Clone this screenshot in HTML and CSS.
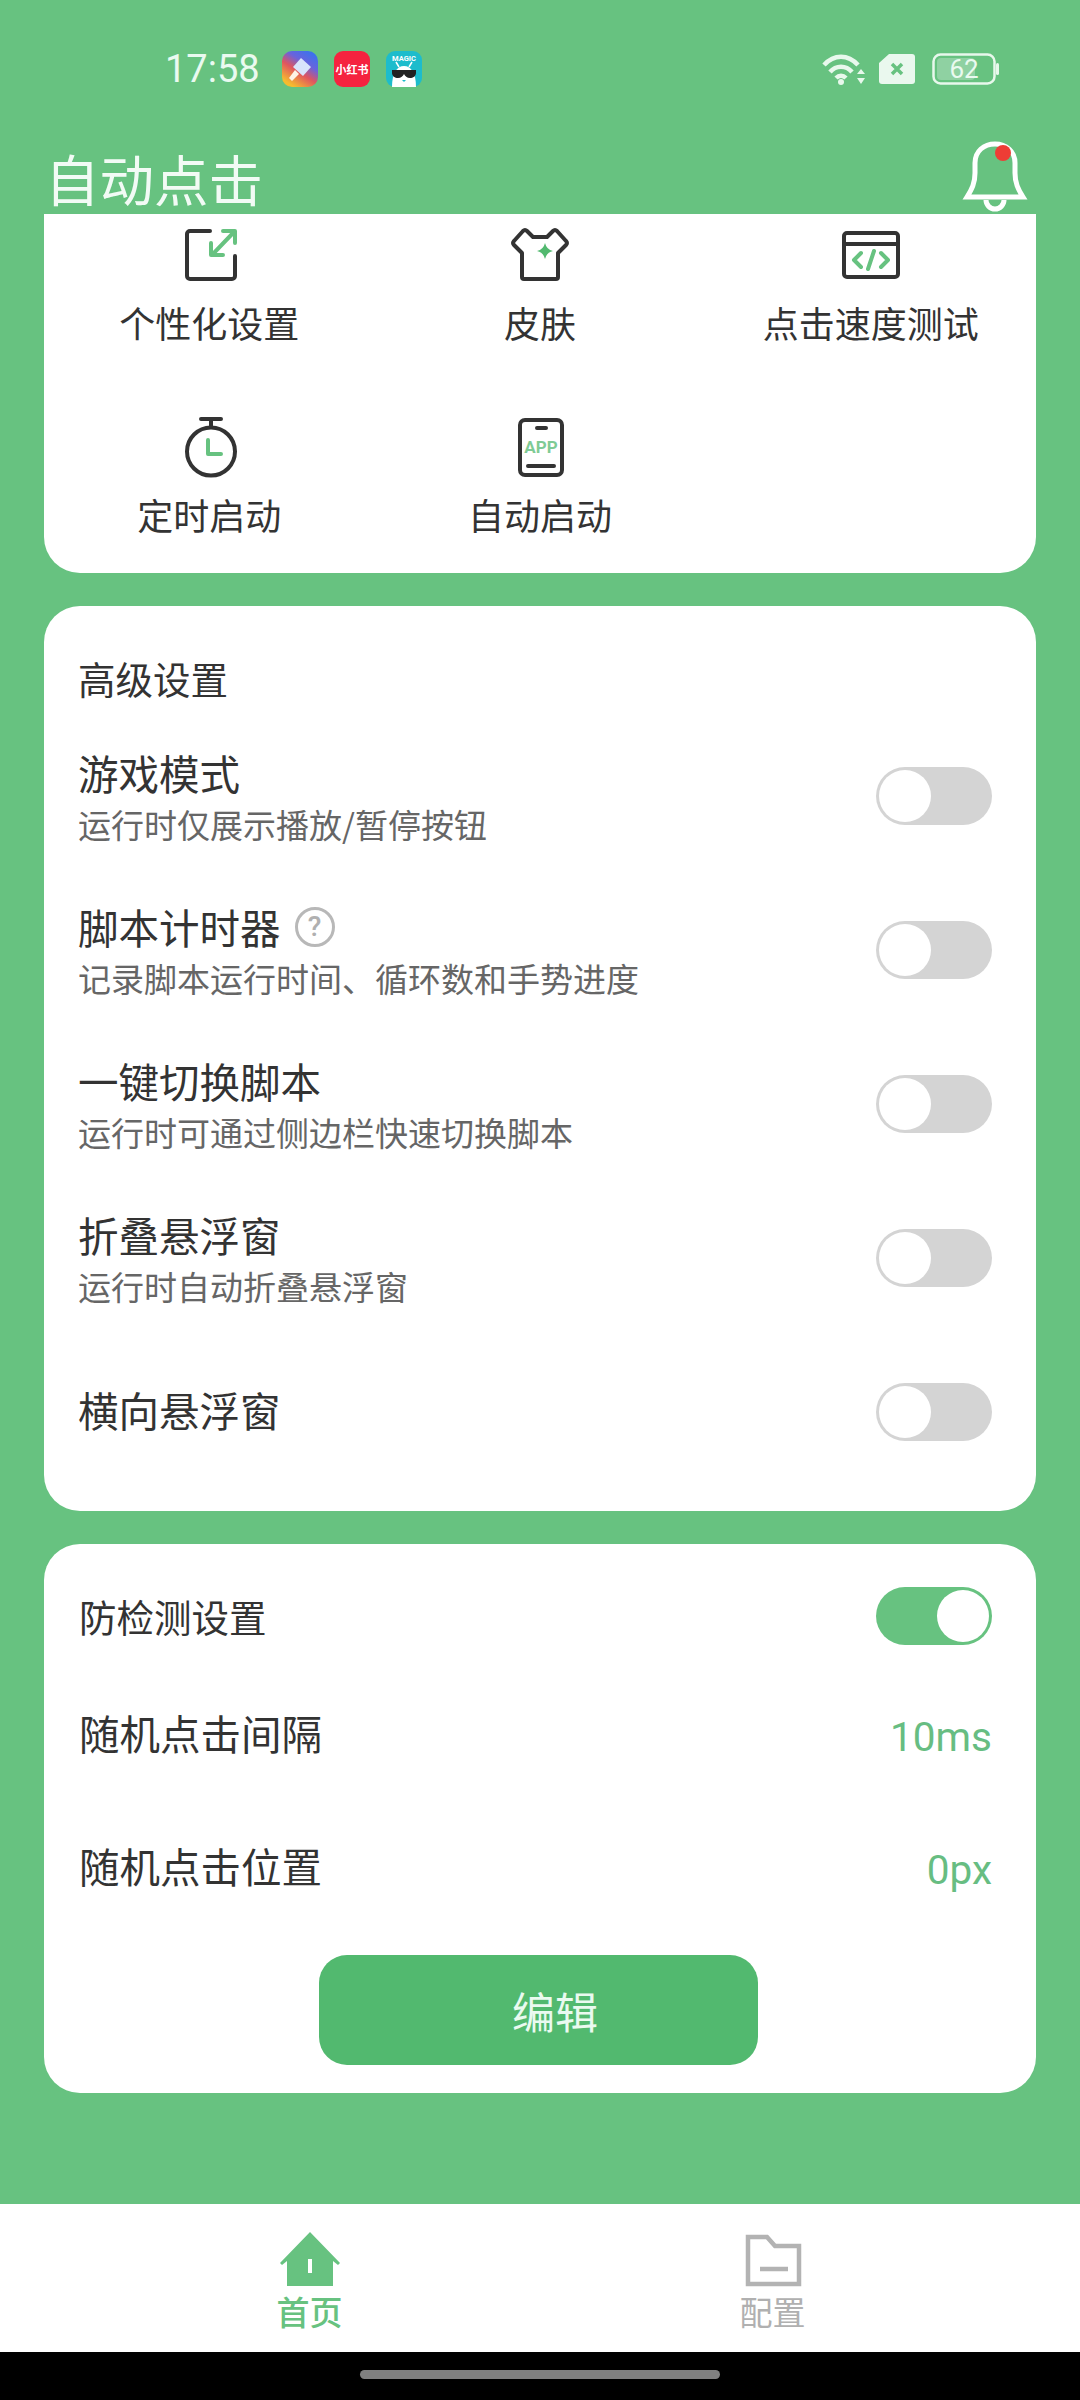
FILE: index.html
```html
<!DOCTYPE html>
<html lang="zh-CN">
<head>
    <meta charset="UTF-8">
    <meta name="viewport" content="width=device-width, initial-scale=1.0">
    <title>自动点击</title>
    <link rel="stylesheet" href="styles.css">
</head>
<body>
    <div class="statusbar">
        <span class="time">17:58</span>
        <svg class="app-icon first" viewBox="0 0 36 36">
            <defs>
                <linearGradient id="brushBg" x1="1" y1="0" x2="0.35" y2="1">
                    <stop offset="0" stop-color="#2a78f2"/>
                    <stop offset="0.4" stop-color="#6a63dc"/>
                    <stop offset="0.65" stop-color="#e0555f"/>
                    <stop offset="1" stop-color="#f6bb2e"/>
                </linearGradient>
            </defs>
            <rect width="36" height="36" rx="10" fill="url(#brushBg)"/>
            <path d="M19 7l10 9-8 9-10-9z" fill="#d9e4fb"/>
            <path d="M13 19l4 4-7 7-3-3z" fill="#fdf3e6"/>
        </svg>
        <svg class="app-icon" viewBox="0 0 36 36">
            <rect width="36" height="36" rx="9" fill="#f5233f"/>
            <text x="18" y="23" class="xhs-text">小红书</text>
        </svg>
        <svg class="app-icon" viewBox="0 0 36 36">
            <rect width="36" height="36" rx="9" fill="#1dbccc"/>
            <text x="18" y="10" class="magic-text">MAGIC</text>
            <path d="M10 11l3 5M26 11l-3 5" stroke="#ffffff" stroke-width="1.5"/>
            <path d="M6 36c0-14 5-21 12-21s12 7 12 21z" fill="#ffffff"/>
            <path d="M6 19h24v3c0 3-3 5-6 5s-5-2-6-4c-1 2-3 4-6 4s-6-2-6-5z" fill="#222222"/>
            <path d="M16 29l2 2 2-2z" fill="#1dbccc"/>
        </svg>

        <svg class="wifi" viewBox="0 0 48 36">
            <path d="M3 14C13 3 27 3 37 14" />
            <path d="M9 21C15 14 25 14 31 21" />
            <path d="M15 27C18 24 22 24 25 27" />
            <circle cx="20" cy="31" r="3" class="solid"/>
            <path d="M36 23l4-5 4 5zM36 27h8l-4 6z" class="solid"/>
        </svg>
        <svg class="sim" viewBox="0 0 36 30">
            <path d="M10 0H33a3 3 0 0 1 3 3V27a3 3 0 0 1-3 3H3a3 3 0 0 1-3-3V9z" fill="#eaf8ee"/>
            <path d="M13 10l10 10M23 10L13 20" stroke="#67c280" stroke-width="3.5"/>
        </svg>
        <svg class="battery" viewBox="0 0 68 32">
            <rect x="1.5" y="1.5" width="61" height="29" rx="7" fill="none" stroke="#e8f8ec" stroke-width="2.5"/>
            <rect x="5" y="5" width="38" height="22" rx="4" fill="#8fd1a2"/>
            <rect x="64" y="10" width="3" height="12" rx="1.5" fill="#e8f8ec"/>
            <text x="32" y="25" class="battery-text">62</text>
        </svg>
    </div>

    <header class="appbar">
        <h1>自动点击</h1>
        <svg class="bell" viewBox="0 0 70 76">
            <path d="M7 59C12 51 15 45 15 35V25C15 13 24 6 35 6S55 13 55 25V35C55 45 58 51 63 59Z"/>
            <path d="M26 62a9 9 0 0 0 18 0"/>
            <circle cx="43" cy="15" r="8" class="bell-dot"/>
        </svg>
    </header>

    <main class="content">
        <section class="card tools">
            <div class="tool">
                <svg class="tool-icon" viewBox="-2 0 64 64">
                    <path d="M31 9H11a3 3 0 0 0-3 3V54a3 3 0 0 0 3 3H53a3 3 0 0 0 3-3V34"/>
                    <path class="accent" d="M32 21V33H44M33 33L55 10M44 9H56V21"/>
                </svg>
                <span>个性化设置</span>
            </div>
            <div class="tool">
                <svg class="tool-icon" viewBox="0 0 64 64">
                    <path d="M15 9Q17 7 19 9L25 15H39L45 9Q47 7 49 9L58 19Q60 21 58 23L50 31V55a2 2 0 0 1-2 2H16a2 2 0 0 1-2-2V31L6 23Q4 21 6 19Z"/>
                    <path class="accent-fill" d="M37 21Q38.500 27.500 45 29Q38.500 30.500 37 37Q35.500 30.500 29 29Q35.500 27.500 37 21Z"/>
                </svg>
                <span>皮肤</span>
            </div>
            <div class="tool">
                <svg class="tool-icon" viewBox="0 0 64 64">
                    <rect x="5" y="11" width="54" height="44" rx="3"/>
                    <path d="M5 22H59"/>
                    <path class="accent" d="M22 31L15 38L22 45M42 31L49 38L42 45M35 29L29 47"/>
                </svg>
                <span>点击速度测试</span>
            </div>
            <div class="tool">
                <svg class="tool-icon" viewBox="-2 0 64 64">
                    <circle cx="32" cy="37.500" r="24"/>
                    <path d="M22 5H42M32 5V13"/>
                    <path class="accent" d="M29 26V40H42"/>
                </svg>
                <span>定时启动</span>
            </div>
            <div class="tool">
                <svg class="tool-icon" viewBox="0 0 64 64">
                    <rect x="12" y="6" width="42" height="55" rx="5"/>
                    <path d="M29 14H38M20 52H46"/>
                    <text x="33" y="39" class="app-label">APP</text>
                </svg>
                <span>自动启动</span>
            </div>
        </section>

        <section class="card advanced">
            <h2>高级设置</h2>
            <div class="row">
                <div class="row-text">
                    <div class="row-title">游戏模式</div>
                    <div class="row-sub">运行时仅展示播放/暂停按钮</div>
                </div>
                <div class="toggle"><i></i></div>
            </div>
            <div class="row">
                <div class="row-text">
                    <div class="row-title">脚本计时器<span class="help">?</span></div>
                    <div class="row-sub">记录脚本运行时间、循环数和手势进度</div>
                </div>
                <div class="toggle"><i></i></div>
            </div>
            <div class="row">
                <div class="row-text">
                    <div class="row-title">一键切换脚本</div>
                    <div class="row-sub">运行时可通过侧边栏快速切换脚本</div>
                </div>
                <div class="toggle"><i></i></div>
            </div>
            <div class="row">
                <div class="row-text">
                    <div class="row-title">折叠悬浮窗</div>
                    <div class="row-sub">运行时自动折叠悬浮窗</div>
                </div>
                <div class="toggle"><i></i></div>
            </div>
            <div class="row">
                <div class="row-title single">横向悬浮窗</div>
                <div class="toggle"><i></i></div>
            </div>
        </section>

        <section class="card detect">
            <div class="detect-head">
                <h2>防检测设置</h2>
                <div class="toggle on"><i></i></div>
            </div>
            <div class="value-row">
                <span class="row-title">随机点击间隔</span>
                <span class="value">10ms</span>
            </div>
            <div class="value-row">
                <span class="row-title">随机点击位置</span>
                <span class="value">0px</span>
            </div>
            <button type="button" class="edit-btn">编辑</button>
        </section>
    </main>

    <nav class="tabbar">
        <div class="tab active">
            <svg class="tab-icon" viewBox="0 0 60 56">
                <path d="M30 0L60 31L58 33L53 29V54H7V29L2 33L0 31Z" fill="#67c280"/>
                <rect x="28" y="27" width="4" height="14" fill="#ffffff"/>
            </svg>
            <span>首页</span>
        </div>
        <div class="tab">
            <svg class="tab-icon" viewBox="0 0 60 56">
                <path d="M5 5H24L32 14H56V52H5Z" fill="none" stroke="#b3b3b3" stroke-width="4.500"/>
                <path d="M17 37H45" stroke="#b3b3b3" stroke-width="4.500"/>
            </svg>
            <span>配置</span>
        </div>
    </nav>
    <div class="gesture-bar"><i></i></div>
</body>
</html>
```

FILE: styles.css
```css
/* Global */
body {
    margin: 0;
    width: 1080px;
    height: 2400px;
    display: flex;
    flex-direction: column;
    overflow: hidden;
    background-color: #67c280;
    color: #333333;
    font-family: "Noto Sans CJK SC", "Noto Sans", sans-serif;
}
h1, h2 {
    margin: 0;
    font-weight: 400;
}

/* Status bar */
.statusbar {
    height: 138px;
    display: flex;
    align-items: center;
    padding-left: 165px;
    flex-shrink: 0;
}
.time {
    width: 117px;
    color: #eafaf0;
    font-family: Roboto, sans-serif;
    font-size: 38px;
}
.app-icon {
    width: 36px;
    height: 36px;
    margin-right: 16px;
}
.xhs-text {
    fill: #ffffff;
    font-size: 11px;
    font-weight: 700;
    text-anchor: middle;
}
.magic-text {
    fill: #ffffff;
    font-family: Roboto, sans-serif;
    font-size: 7.500px;
    font-weight: 700;
    text-anchor: middle;
}
.wifi {
    width: 48px;
    height: 36px;
    margin-left: 383px;
}
.wifi path {
    fill: none;
    stroke: #e8f8ec;
    stroke-width: 4.500;
}
.wifi .solid {
    fill: #e8f8ec;
    stroke: none;
}
.sim {
    width: 36px;
    height: 30px;
    margin-left: 10px;
}
.battery {
    width: 68px;
    height: 32px;
    margin-left: 17px;
}
.battery-text {
    fill: #eafaf0;
    font-family: Roboto, sans-serif;
    font-size: 26px;
    text-anchor: middle;
}

/* App bar */
.appbar {
    height: 76px;
    display: flex;
    justify-content: space-between;
    padding: 0 50px 0 45px;
    flex-shrink: 0;
}
.appbar h1 {
    color: #f2fbf5;
    font-size: 54.500px;
    line-height: 76px;
    padding-top: 2px;
}
.bell {
    width: 70px;
    height: 76px;
}
.bell path {
    fill: none;
    stroke: #ffffff;
    stroke-width: 5;
}
.bell-dot {
    fill: #ee3d35;
}

/* Cards */
.content {
    flex: 1;
    display: flex;
    flex-direction: column;
    gap: 33px;
    padding: 0 44px;
}
.card {
    background-color: #ffffff;
    border-radius: 36px;
}
.card h2 {
    font-size: 37.500px;
    line-height: 50px;
}

/* Top shortcuts */
.tools {
    height: 359px;
    display: grid;
    grid-template-columns: repeat(3, 1fr);
    grid-auto-rows: 192px;
    border-radius: 0 0 36px 36px;
}
.tool {
    display: flex;
    flex-direction: column;
    align-items: center;
    padding-top: 8px;
    font-size: 36px;
    line-height: 50px;
}
.tool span {
    margin-top: 11px;
}
.tool-icon {
    width: 64px;
    height: 64px;
    fill: none;
    stroke: #333333;
    stroke-width: 4;
    stroke-linecap: round;
    stroke-linejoin: round;
}
.tool-icon .accent {
    stroke: #67c280;
}
.tool-icon .accent-fill {
    fill: #52b96f;
    stroke: none;
}
.app-label {
    fill: #7fcb95;
    stroke: none;
    font-family: Roboto, sans-serif;
    font-size: 17px;
    font-weight: 700;
    text-anchor: middle;
}

/* Advanced settings */
.advanced {
    height: 905px;
    box-sizing: border-box;
    padding: 47px 44px 0 34px;
}
.advanced h2 {
    margin-bottom: 16px;
}
.row {
    height: 154px;
    display: flex;
    align-items: center;
    justify-content: space-between;
}
.row-text {
    padding-top: 4px;
}
.row-title {
    display: flex;
    align-items: center;
    font-size: 40.500px;
    line-height: 50px;
}
.row-title.single {
    padding-bottom: 4px;
}
.row-sub {
    margin-top: 2px;
    color: #666666;
    font-size: 33px;
    line-height: 48px;
}
.help {
    width: 34px;
    height: 34px;
    margin-left: 14px;
    display: flex;
    align-items: center;
    justify-content: center;
    border: 3px solid #b8b8b8;
    border-radius: 50%;
    color: #b0b0b0;
    font-family: Roboto, sans-serif;
    font-size: 28px;
    font-weight: 500;
}
.toggle {
    width: 116px;
    height: 58px;
    box-sizing: border-box;
    padding: 3px;
    display: flex;
    flex-shrink: 0;
    border-radius: 29px;
    background-color: #d4d4d4;
}
.toggle i {
    width: 52px;
    height: 52px;
    border-radius: 50%;
    background-color: #ffffff;
}
.toggle.on {
    justify-content: flex-end;
    background-color: #67c280;
}

/* Anti detection */
.detect {
    height: 549px;
    box-sizing: border-box;
    padding: 43px 44px 0 35px;
    display: flex;
    flex-direction: column;
}
.detect-head {
    display: flex;
    align-items: center;
    justify-content: space-between;
    margin-bottom: 25px;
}
.value-row {
    height: 133px;
    flex-shrink: 0;
    display: flex;
    align-items: center;
    justify-content: space-between;
}
.value-row .row-title {
    padding-bottom: 8px;
}
.value {
    color: #67bd82;
    font-family: Roboto, sans-serif;
    font-size: 40.500px;
}
.edit-btn {
    width: 439px;
    height: 110px;
    margin: 19px 0 0 5px;
    padding-left: 40px;
    align-self: center;
    border: none;
    border-radius: 28px;
    background-color: #52b96f;
    color: #eafaf0;
    font-family: inherit;
    font-size: 43px;
}

/* Bottom tabs */
.tabbar {
    height: 148px;
    display: flex;
    padding-left: 78px;
    background-color: #ffffff;
    flex-shrink: 0;
}
.tab {
    width: 463px;
    display: flex;
    flex-direction: column;
    align-items: center;
    padding-top: 28px;
    color: #b0b0b0;
    font-size: 33px;
    line-height: 44px;
}
.tab.active {
    color: #67c280;
    font-weight: 500;
}
.tab-icon {
    width: 60px;
    height: 56px;
}
.tab span {
    margin-top: 1px;
}
.gesture-bar {
    height: 48px;
    display: flex;
    justify-content: center;
    padding-top: 18px;
    box-sizing: border-box;
    background-color: #000000;
    flex-shrink: 0;
}
.gesture-bar i {
    width: 360px;
    height: 9px;
    border-radius: 5px;
    background-color: #808080;
}
```
